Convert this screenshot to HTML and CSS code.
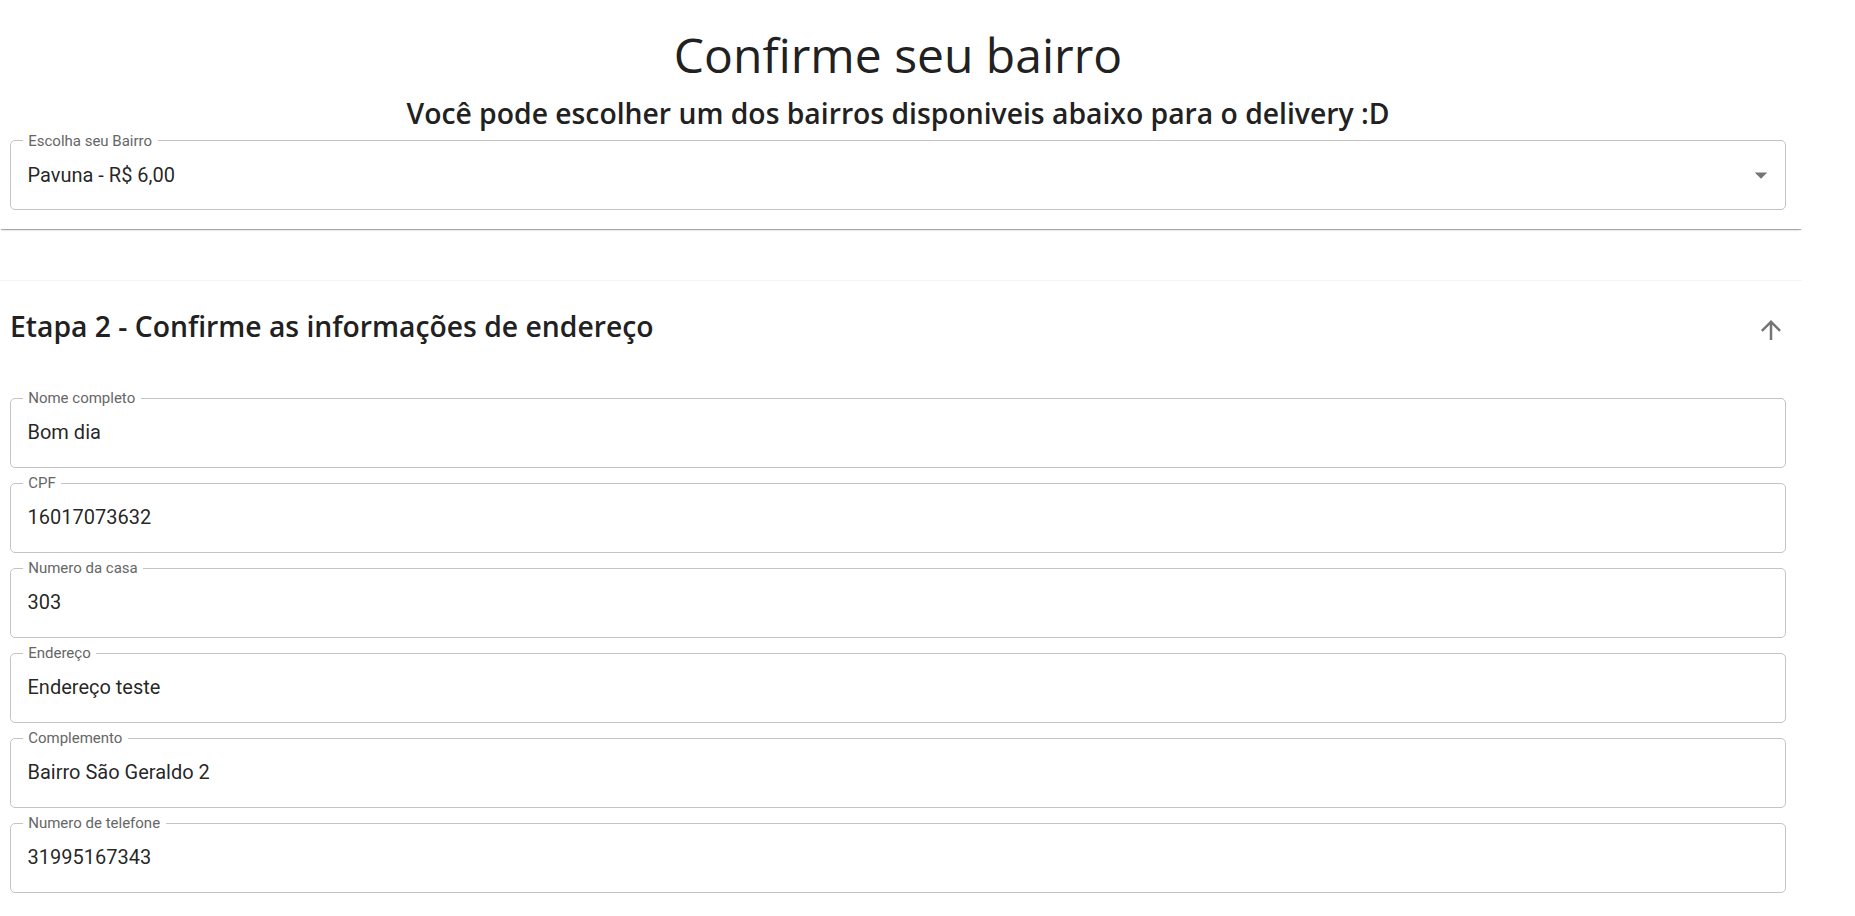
FILE: index.html
```html
<!DOCTYPE html>
<html lang="pt-BR">
<head>
<meta charset="utf-8">
<title>Confirme seu bairro</title>
<link rel="stylesheet" href="styles.css">
</head>
<body>
<div class="page">
  <section class="accordion acc1">
    <h1 class="title">Confirme seu bairro</h1>
    <h2 class="subtitle">Você pode escolher um dos bairros disponiveis abaixo para o delivery :D</h2>
    <fieldset class="field select">
      <legend>Escolha seu Bairro</legend>
      <div class="value row">
        <span>Pavuna - R$ 6,00</span>
        <svg class="caret" viewBox="0 0 24 24" width="30" height="30"><path d="M7 10l5 5 5-5z"/></svg>
      </div>
    </fieldset>
  </section>

  <section class="accordion acc2">
    <div class="summary">
      <h2 class="step">Etapa 2 - Confirme as informações de endereço</h2>
      <svg class="expand" viewBox="0 0 24 24" width="30" height="30"><path d="M4 12l1.41 1.41L11 7.83V20h2V7.83l5.58 5.59L20 12l-8-8-8 8z"/></svg>
    </div>
    <div class="details">
      <fieldset class="field"><legend>Nome completo</legend><div class="value">Bom dia</div></fieldset>
      <fieldset class="field"><legend>CPF</legend><div class="value">16017073632</div></fieldset>
      <fieldset class="field"><legend>Numero da casa</legend><div class="value">303</div></fieldset>
      <fieldset class="field"><legend>Endereço</legend><div class="value">Endereço teste</div></fieldset>
      <fieldset class="field"><legend>Complemento</legend><div class="value">Bairro São Geraldo 2</div></fieldset>
      <fieldset class="field"><legend>Numero de telefone</legend><div class="value">31995167343</div></fieldset>
    </div>
  </section>
</div>
</body>
</html>
```

FILE: styles.css
```css
* { box-sizing: border-box; }

body {
  margin: 0;
  background: #fff;
  font-family: "Open Sans", "Noto Sans", sans-serif;
  color: #212121;
}

.page {
  width: 1802px;
  display: flex;
  flex-direction: column;
  gap: 51px;
}

.accordion {
  background: #fff;
}

.acc1 {
  display: flex;
  flex-direction: column;
  padding: 27px 16px 19px 10px;
  box-shadow: 0 2px 1px -1px rgba(0,0,0,0.3),
              0 3px 3px -3px rgba(0,0,0,0.2);
}

.acc2 {
  border-top: 1px solid #f4f4f4;
}

.title {
  margin: 0;
  font-size: 48px;
  line-height: 56px;
  font-weight: 500;
  text-align: center;
  color: #212121;
}

.subtitle {
  margin: 12.6px 0 0;
  font-size: 28.3px;
  line-height: 34px;
  font-weight: 600;
  text-align: center;
  color: #212121;
}

.field {
  margin: 0;
  min-width: 0;
  padding: 11px 17.5px 19.5px 16.5px;
  border: 1px solid #c4c4c4;
  border-radius: 5px;
}

.field.select {
  margin-top: 2.4px;
  padding-right: 9px;
}

.field legend {
  font-family: Roboto, "Liberation Sans", sans-serif;
  font-size: 15px;
  line-height: 18px;
  color: #666;
  padding: 0 5.5px;
  margin-left: -4.8px;
}

.value {
  font-family: Roboto, "Liberation Sans", sans-serif;
  font-size: 20px;
  line-height: 29px;
  height: 29px;
  color: rgba(0,0,0,0.87);
}

.row {
  display: flex;
  align-items: center;
  justify-content: space-between;
}

.caret, .expand {
  fill: #757575;
  flex: none;
}

.summary {
  height: 97px;
  display: flex;
  align-items: center;
  justify-content: space-between;
  padding: 0 16px 0 10px;
}

.step {
  margin: 0 0 8px;
  font-size: 28.3px;
  line-height: 34px;
  font-weight: 600;
  color: #212121;
}

.details {
  display: flex;
  flex-direction: column;
  gap: 6.5px;
  padding: 11px 16px 20px 10px;
}
```
